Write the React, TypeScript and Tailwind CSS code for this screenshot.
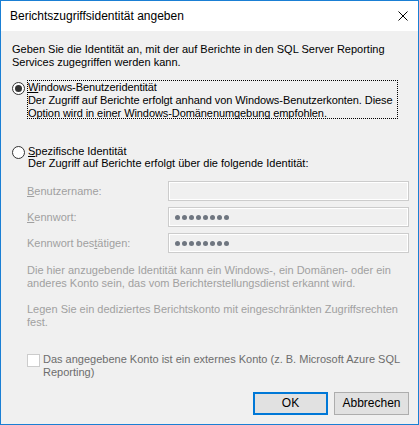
import React from "react";

const body = "font-['Liberation_Sans',Arial,sans-serif] text-[11px] leading-[13px]";

function Dots() {
  return (
    <div className="flex items-center gap-[2px] pl-[6px] h-full">
      {Array.from({ length: 8 }).map((_, i) => (
        <span key={i} className="block w-[5px] h-[5px] rounded-full bg-[#6f7680]" />
      ))}
    </div>
  );
}

function Field({ label, children }: { label: React.ReactNode; children?: React.ReactNode }) {
  return (
    <div className="flex items-center h-[20px]">
      <div className={`w-[156px] pl-[15px] text-[#a0a0a0] ${body}`}>{label}</div>
      <div className="w-[241px] h-[20px] border border-[#cccccc] bg-[#f0f0f0] shadow-[inset_0_0_0_1px_#ffffff]">
        {children}
      </div>
    </div>
  );
}

export default function App() {
  return (
    <div className="w-[419px] h-[425px] border border-[#1a7fd4] bg-[#f0f0f0] flex flex-col box-border overflow-hidden">
      <div className="h-[30px] bg-white flex items-center justify-between pl-[9px] pr-[9px] shrink-0">
        <span className="font-['Liberation_Sans',Arial,sans-serif] text-[12px] text-black">
          Berichtszugriffsidentität angeben
        </span>
        <svg width="10" height="10" viewBox="0 0 10 10" className="mr-[1px]">
          <path d="M0.5 0.5 L9.5 9.5 M9.5 0.5 L0.5 9.5" stroke="#000" strokeWidth="1" />
        </svg>
      </div>
      <div className={`flex flex-col pl-[11px] pr-[9px] text-black ${body}`}>
        <div className="mt-[12px] whitespace-nowrap">
          <div>Geben Sie die Identität an, mit der auf Berichte in den SQL Server Reporting</div>
          <div>Services zugegriffen werden kann.</div>
        </div>

        <div className="mt-[11px] flex items-start">
          <div className="mt-[2px] w-[13px] h-[13px] rounded-full border border-[#333333] bg-white flex items-center justify-center shrink-0">
            <div className="w-[7px] h-[7px] rounded-full bg-[#333333]" />
          </div>
          <div className="ml-[2px] w-[371px] h-[39px] border border-dotted border-black whitespace-nowrap tracking-[-0.08px]">
            <div>
              <u>W</u>indows-Benutzeridentität
            </div>
            <div>Der Zugriff auf Berichte erfolgt anhand von Windows-Benutzerkonten. Diese</div>
            <div>Option wird in einer Windows-Domänenumgebung empfohlen.</div>
          </div>
        </div>

        <div className="mt-[26px] flex items-start leading-[12px]">
          <div className="mt-[1px] w-[13px] h-[13px] rounded-full border border-[#333333] bg-white shrink-0" />
          <div className="ml-[3px] whitespace-nowrap">
            <div>
              <u>S</u>pezifische Identität
            </div>
            <div>Der Zugriff auf Berichte erfolgt über die folgende Identität:</div>
          </div>
        </div>

        <div className="mt-[12px] flex flex-col gap-[6px]">
          <Field
            label={
              <>
                <u>B</u>enutzername:
              </>
            }
          />
          <Field
            label={
              <>
                <u>K</u>ennwort:
              </>
            }
          >
            <Dots />
          </Field>
          <Field
            label={
              <>
                Kennwort bes<u>t</u>ätigen:
              </>
            }
          >
            <Dots />
          </Field>
        </div>

        <div className="mt-[11px] pl-[15px] text-[#a0a0a0] whitespace-nowrap">
          <div>Die hier anzugebende Identität kann ein Windows-, ein Domänen- oder ein</div>
          <div>anderes Konto sein, das vom Berichterstellungsdienst erkannt wird.</div>
          <div className="mt-[13px]">Legen Sie ein dediziertes Berichtskonto mit eingeschränkten Zugriffsrechten</div>
          <div>fest.</div>
        </div>

        <div className="mt-[24px] pl-[15px] flex items-start">
          <div className="mt-[1px] w-[13px] h-[13px] border border-[#cccccc] bg-white shrink-0" />
          <div className="ml-[3px] text-[#6d6d6d] text-[11px] leading-[13px] whitespace-nowrap">
            <div>Das angegebene Konto ist ein externes Konto (z. B. Microsoft Azure SQL</div>
            <div>Reporting)</div>
          </div>
        </div>

        <div className="mt-[13px] flex justify-end gap-[6px]">
          <button className="w-[75px] h-[23px] border-2 border-[#0078d7] bg-[#e1e1e1] text-black text-[12px] font-['Liberation_Sans',Arial,sans-serif]">
            OK
          </button>
          <button className="w-[75px] h-[23px] border border-[#adadad] bg-[#e1e1e1] text-black text-[12px] font-['Liberation_Sans',Arial,sans-serif]">
            Abbrechen
          </button>
        </div>
      </div>
    </div>
  );
}
